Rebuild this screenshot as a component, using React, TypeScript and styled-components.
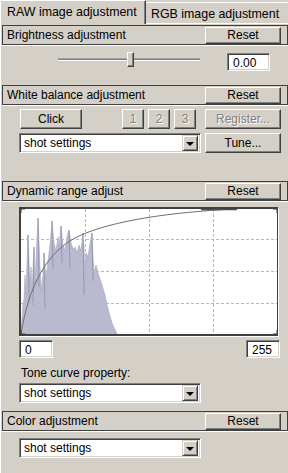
import React from "react";
import styled, { createGlobalStyle, css } from "styled-components";

const Global = createGlobalStyle`
  html, body { margin: 0; padding: 0; background: #d4d0c8; }
  body { font-family: "Liberation Sans", Arial, sans-serif; font-size: 12px; color: #000; }
`;

const FONT = `"Liberation Sans", Arial, sans-serif`;

const Window = styled.div`
  width: 288px;
  height: 473px;
  overflow: hidden;
  background: #d4d0c8;
  display: flex;
  flex-direction: column;
`;

const TabBar = styled.div`
  display: flex;
  height: 24px;
  align-items: flex-end;
`;

const Tab = styled.div<{ $active?: boolean }>`
  box-sizing: border-box;
  display: flex;
  align-items: center;
  font-size: 12.4px;
  white-space: nowrap;
  ${(p) =>
    p.$active
      ? css`
          width: 146px;
          height: 24px;
          padding: 0 0 2px 6px;
          border-top: 1px solid #fff;
          border-left: 1px solid #fff;
          border-right: 1px solid #404040;
          box-shadow: inset -1px 0 #808080;
        `
      : css`
          flex: 1;
          height: 22px;
          padding: 1px 0 0 5px;
          border-top: 1px solid #fff;
          border-bottom: 1px solid #fff;
        `}
`;

const Panel = styled.div`
  flex: 1;
  display: flex;
  flex-direction: column;
  border-left: 1px solid #fff;
`;

const Header = styled.div<{ $mt: number }>`
  box-sizing: border-box;
  margin: ${(p) => p.$mt}px 0 0 1px;
  height: 20px;
  border: 1px solid #404040;
  box-shadow: 0 1px #fff;
  display: flex;
  align-items: center;
  justify-content: space-between;
  padding: 0 6px 0 4px;
`;

const Button = styled.button<{ $w: number; $h?: number }>`
  box-sizing: border-box;
  width: ${(p) => p.$w}px;
  height: ${(p) => p.$h ?? 20}px;
  padding: 0 0 1px 0;
  margin: 0;
  background: #d4d0c8;
  font: 12px ${FONT};
  color: #000;
  border: 1px solid;
  border-color: #fff #404040 #404040 #fff;
  box-shadow: inset -1px -1px #808080;
  &:disabled {
    color: #808080;
    text-shadow: 1px 1px #fff;
  }
`;

const Row = styled.div<{ $mt: number; $h: number; $pl: number; $pr?: number }>`
  display: flex;
  align-items: center;
  margin-top: ${(p) => p.$mt}px;
  height: ${(p) => p.$h}px;
  padding-left: ${(p) => p.$pl}px;
  padding-right: ${(p) => p.$pr ?? 0}px;
`;

const Spacer = styled.div<{ $w?: number }>`
  ${(p) => (p.$w !== undefined ? css`width: ${p.$w}px;` : css`flex: 1;`)}
  flex-shrink: 0;
`;

const NumGroup = styled.div`
  display: flex;
  gap: 4px;
`;

const Slider = styled.div`
  position: relative;
  width: 142px;
  height: 18px;
`;

const Track = styled.div`
  position: absolute;
  left: 0;
  right: 0;
  top: 6px;
  height: 2px;
  box-sizing: border-box;
  border-top: 1px solid #808080;
  border-bottom: 1px solid #fff;
  box-shadow: 0 -1px #a0a0a0;
`;

const Thumb = styled.div`
  position: absolute;
  left: 69px;
  top: -1px;
  width: 7px;
  height: 15px;
  box-sizing: border-box;
  background: #d4d0c8;
  border: 1px solid;
  border-color: #fff #404040 #404040 #fff;
  box-shadow: inset -1px -1px #808080;
`;

const Field = styled.div<{ $w: number; $ml?: number }>`
  box-sizing: border-box;
  width: ${(p) => p.$w}px;
  height: 18px;
  margin-left: ${(p) => p.$ml ?? 0}px;
  background: #fff;
  border: 1px solid;
  border-color: #808080 #fff #fff #808080;
  box-shadow: inset 1px 1px #404040, inset -1px -1px #d4d0c8;
  padding: 1px 0 0 5px;
  display: flex;
  align-items: center;
  font-size: 12px;
`;

const Select = styled.div`
  box-sizing: border-box;
  width: 182px;
  height: 20px;
  background: #fff;
  border: 1px solid;
  border-color: #808080 #fff #fff #808080;
  box-shadow: inset 1px 1px #404040, inset -1px -1px #d4d0c8;
  display: flex;
  align-items: center;
  padding: 2px;
`;

const SelectText = styled.span`
  flex: 1;
  padding-left: 2px;
  font-size: 12px;
`;

const ArrowBtn = styled.div`
  box-sizing: border-box;
  width: 16px;
  height: 16px;
  background: #d4d0c8;
  border: 1px solid;
  border-color: #d4d0c8 #404040 #404040 #d4d0c8;
  box-shadow: inset 1px 1px #fff, inset -1px -1px #808080;
  display: flex;
  align-items: center;
  justify-content: center;
`;

const Caret = styled.div`
  width: 0;
  height: 0;
  border-left: 4px solid transparent;
  border-right: 4px solid transparent;
  border-top: 4px solid #000;
  margin-top: 1px;
`;

const Graph = styled.div`
  box-sizing: border-box;
  margin: 6px 0 0 18px;
  width: 259px;
  height: 129px;
  border-style: solid;
  border-width: 2px 1px 2px 2px;
  border-color: #404040;
  background: #fff;
  box-shadow: 1px 1px #fff;
`;

const GraphSvg = styled.svg`
  display: block;
`;

const Label = styled.div<{ $mt: number }>`
  margin-top: ${(p) => p.$mt}px;
  padding-left: 20px;
  height: 14px;
  line-height: 14px;
  font-size: 12px;
`;

const Dropdown = ({ text }: { text: string }) => (
  <Select>
    <SelectText>{text}</SelectText>
    <ArrowBtn>
      <Caret />
    </ArrowBtn>
  </Select>
);

const histogram =
  "0,125 1,108 2,96 3,90 4,66 5,86 7,26 9,78 10,58 11,84 13,38 14,74 16,30 17,9 19,58 20,82 22,66 23,44 25,70 27,52 29,36 31,12 33,34 35,42 37,28 38,38 40,17 42,36 44,42 46,28 48,21 50,34 52,40 54,38 56,44 58,36 60,42 62,24 63,40 64,66 65,44 67,48 69,34 71,24 72,48 73,64 75,56 77,64 79,70 81,76 84,86 87,100 91,114 96,125";

const spikes = [
  [7, 26, 8, 92],
  [17, 9, 18, 78],
  [31, 12, 32, 60],
  [40, 17, 41, 54],
  [48, 21, 49, 60],
  [62, 24, 63, 86],
  [71, 24, 72, 72],
  [13, 38, 12, 96],
  [23, 44, 24, 100],
];

const Chart = () => (
  <GraphSvg width={256} height={125} viewBox="0 0 256 125">
    <polygon points={histogram} fill="#b9b9d0" stroke="#a6a6c0" strokeWidth={0.6} />
    {spikes.map(([x1, y1, x2, y2], i) => (
      <line key={i} x1={x1} y1={y1} x2={x2} y2={y2} stroke="#8e8eaa" strokeWidth={0.8} />
    ))}
    <g stroke="#b8b8b8" strokeWidth={1} strokeDasharray="3 2" fill="none">
      <line x1={64.5} y1={0} x2={64.5} y2={125} />
      <line x1={128.5} y1={0} x2={128.5} y2={125} />
      <line x1={192.5} y1={0} x2={192.5} y2={125} />
      <line x1={0} y1={30.5} x2={256} y2={30.5} />
      <line x1={0} y1={62.5} x2={256} y2={62.5} />
      <line x1={0} y1={94.5} x2={256} y2={94.5} />
    </g>
    <path
      d="M0,125 C8,76 26,42 58,27 S150,3 214,0"
      fill="none"
      stroke="#6e6e6e"
      strokeWidth={1}
    />
    <line x1={180} y1={0.5} x2={216} y2={0.5} stroke="#505050" strokeWidth={1.5} />
    <g stroke="#404040" strokeWidth={1} fill="#fff">
      <polyline points="0,4 0,0 4,0" fill="none" />
      <polyline points="252,0 256,0 256,4" fill="none" />
      <polyline points="0,121 0,125 4,125" fill="none" />
      <polyline points="252,125 256,125 256,121" fill="none" />
    </g>
  </GraphSvg>
);

export default function App() {
  return (
    <>
      <Global />
      <Window>
        <TabBar>
          <Tab $active>RAW image adjustment</Tab>
          <Tab>RGB image adjustment</Tab>
        </TabBar>
        <Panel>
          <Header $mt={1}>
            <span>Brightness adjustment</span>
            <Button $w={76} $h={17}>Reset</Button>
          </Header>
          <Row $mt={8} $h={18} $pl={57}>
            <Slider>
              <Track />
              <Thumb />
            </Slider>
            <Field $w={43} $ml={27}>0.00</Field>
          </Row>

          <Header $mt={14}>
            <span>White balance adjustment</span>
            <Button $w={76} $h={17}>Reset</Button>
          </Header>
          <Row $mt={4} $h={20} $pl={19}>
            <Button $w={62}>Click</Button>
            <Spacer $w={40} />
            <NumGroup>
              <Button $w={22} disabled>1</Button>
              <Button $w={22} disabled>2</Button>
              <Button $w={22} disabled>3</Button>
            </NumGroup>
            <Spacer $w={9} />
            <Button $w={76} disabled>Register...</Button>
          </Row>
          <Row $mt={4} $h={20} $pl={18}>
            <Dropdown text="shot settings" />
            <Spacer $w={4} />
            <Button $w={76}>Tune...</Button>
          </Row>

          <Header $mt={28}>
            <span>Dynamic range adjust</span>
            <Button $w={76} $h={17}>Reset</Button>
          </Header>
          <Graph>
            <Chart />
          </Graph>
          <Row $mt={4} $h={18} $pl={18} $pr={8}>
            <Field $w={34}>0</Field>
            <Spacer />
            <Field $w={34}>255</Field>
          </Row>
          <Label $mt={8}>Tone curve property:</Label>
          <Row $mt={3} $h={20} $pl={18}>
            <Dropdown text="shot settings" />
          </Row>

          <Header $mt={8}>
            <span>Color adjustment</span>
            <Button $w={76} $h={17}>Reset</Button>
          </Header>
          <Row $mt={7} $h={20} $pl={18}>
            <Dropdown text="shot settings" />
          </Row>
        </Panel>
      </Window>
    </>
  );
}
